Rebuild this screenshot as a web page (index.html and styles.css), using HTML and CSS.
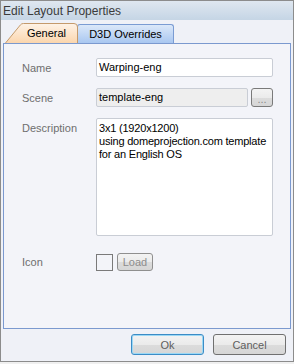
FILE: index.html
```html
<!DOCTYPE html>
<html lang="en">
<head>
    <meta charset="UTF-8">
    <title>Edit Layout Properties</title>
    <link rel="stylesheet" href="styles.css">
</head>
<body>
    <div class="window">
        <div class="titlebar">Edit Layout Properties</div>

        <div class="tabs">
            <div class="tab tab-active">
                <svg class="tab-shape" viewBox="0 0 73 20" width="73" height="20">
                    <defs>
                        <linearGradient id="peach" x1="0" y1="0" x2="0" y2="1">
                            <stop offset="0" stop-color="#fef3e7"/>
                            <stop offset="1" stop-color="#fbd6ae"/>
                        </linearGradient>
                    </defs>
                    <path d="M0.5 20 L15.5 1.8 Q16.5 0.5 18.5 0.5 L69 0.5 Q72.5 0.5 72.5 4 L72.5 20" fill="url(#peach)" stroke="#c49a6c"/>
                </svg>
                <span>General</span>
            </div>
            <div class="tab tab-blue">D3D Overrides</div>
        </div>

        <div class="panel">
            <div class="row">
                <label>Name</label>
                <div class="field">Warping-eng</div>
            </div>

            <div class="row">
                <label>Scene</label>
                <div class="field-with-btn">
                    <div class="field readonly">template-eng</div>
                    <button class="btn btn-dots">...</button>
                </div>
            </div>

            <div class="row row-top">
                <label>Description</label>
                <div class="field textarea">3x1 (1920x1200)<br>using domeprojection.com template<br>for an English OS</div>
            </div>

            <div class="row row-icon">
                <label>Icon</label>
                <div class="icon-line">
                    <div class="icon-box"></div>
                    <button class="btn btn-load">Load</button>
                </div>
            </div>
        </div>

        <div class="footer">
            <button class="btn btn-ok">Ok</button>
            <button class="btn btn-cancel">Cancel</button>
        </div>
    </div>
</body>
</html>
```

FILE: styles.css
```css
body {
    margin: 0;
    width: 294px;
    height: 364px;
    background: #f0f0f0;
    font-family: "Liberation Sans", Arial, sans-serif;
    font-size: 11px;
    overflow: hidden;
}

.window {
    box-sizing: border-box;
    width: 294px;
    height: 362px;
    border: 1px solid #8c8c8c;
    background: #eff1f7;
    display: flex;
    flex-direction: column;
}

.titlebar {
    height: 19px;
    line-height: 20px;
    padding-left: 2px;
    font-size: 12px;
    color: #3b3b3b;
    background: linear-gradient(#dfe7f0, #c5d5e5);
}

.tabs {
    display: flex;
    align-items: flex-end;
    height: 20px;
    margin-top: 3px;
    padding-left: 4px;
}

.tab {
    box-sizing: border-box;
    height: 20px;
    line-height: 21px;
    color: #000;
    text-align: center;
}

.tab-active {
    position: relative;
    width: 73px;
    padding-left: 10px;
}

.tab-shape {
    position: absolute;
    left: 0;
    top: 0;
}

.tab-active span {
    position: relative;
}

.tab-blue {
    width: 97px;
    height: 19px;
    line-height: 19px;
    margin-left: -1px;
    border: 1px solid #7a9cd3;
    border-bottom: none;
    border-radius: 3px 3px 0 0;
    background: linear-gradient(#dbe8f9, #a9c7f0);
}

.panel {
    box-sizing: border-box;
    height: 286px;
    margin: 0 2px;
    border: 1px solid #7b99cf;
    background: #f3f4f9;
    padding: 14px 17px 0 18px;
}

.row {
    display: grid;
    grid-template-columns: 74px 1fr;
    align-items: center;
    margin-bottom: 11px;
}

.row-top {
    align-items: start;
}

.row-top label {
    padding-top: 4px;
}

.row-icon {
    margin-top: 17px;
}

label {
    color: #6e6e6e;
}

.field {
    box-sizing: border-box;
    height: 19px;
    line-height: 17px;
    padding-left: 2px;
    border: 1px solid #c9cdd5;
    border-radius: 2px;
    background: #fff;
    color: #000;
}

.field.readonly {
    flex: 1;
    background: #eeeeee;
}

.field.textarea {
    height: 118px;
    line-height: 13px;
    padding-top: 3px;
    white-space: nowrap;
    letter-spacing: -0.2px;
}

.field-with-btn {
    display: flex;
    gap: 3px;
}

.btn {
    box-sizing: border-box;
    margin: 0;
    padding: 0;
    font-family: inherit;
    font-size: 11px;
    border: 1px solid #707070;
    border-radius: 3px;
    background: linear-gradient(#f3f3f3 0%, #ebebeb 50%, #dcdcdc 51%, #d6d6d6 100%);
    color: #5e5e5e;
}

.btn-dots {
    width: 22px;
    height: 19px;
    line-height: 20px;
    color: #8a8a8a;
    border-color: #7a7a7a;
}

.icon-line {
    display: flex;
    align-items: center;
    gap: 4px;
}

.icon-box {
    box-sizing: border-box;
    width: 17px;
    height: 17px;
    border: 1px solid #7a7a7a;
}

.btn-load {
    width: 36px;
    height: 18px;
    color: #8c8c8c;
    border-color: #8f8f8f;
}

.footer {
    display: flex;
    justify-content: flex-end;
    gap: 9px;
    padding: 5px 7px 0 0;
}

.btn-ok,
.btn-cancel {
    width: 73px;
    height: 21px;
}

.btn-ok {
    border-color: #3c8cc6;
    box-shadow: inset 0 0 0 1px #9bd8f5;
}
```
